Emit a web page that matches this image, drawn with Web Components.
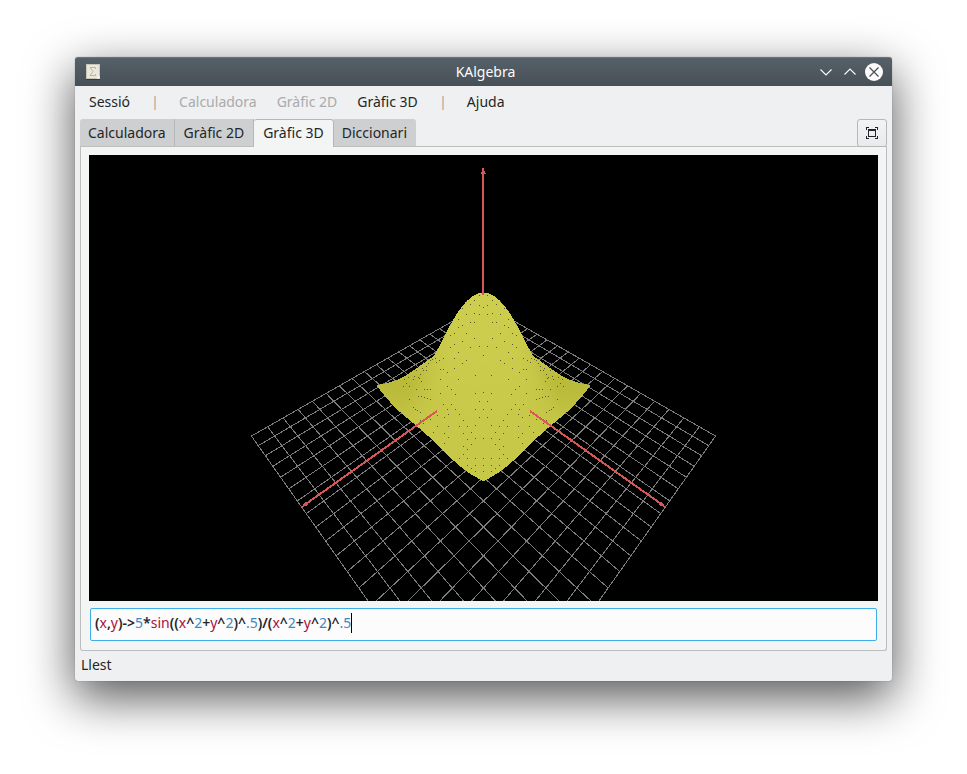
<!DOCTYPE html>
<html lang="ca">
<head>
<meta charset="utf-8">
<title>KAlgebra</title>
<style>
html { background: #fff; }
body {
  margin: 0; box-sizing: border-box; min-height: 100vh; padding: 57px 75px 93px;
  display: flex; flex-direction: column; background: #fff; overflow: hidden;
  font: 14px/20px "Noto Sans", "Open Sans", sans-serif; color: #232629;
}
</style>
</head>
<body>
<ka-window>
  <ka-titlebar slot="title">KAlgebra</ka-titlebar>
  <ka-menubar slot="menu">
    <ka-menu>Sessió</ka-menu><ka-separator></ka-separator><ka-menu disabled>Calculadora</ka-menu><ka-menu disabled>Gràfic 2D</ka-menu><ka-menu>Gràfic 3D</ka-menu><ka-separator></ka-separator><ka-menu>Ajuda</ka-menu>
  </ka-menubar>
  <ka-tabs slot="tabs">
    <ka-tab>Calculadora</ka-tab><ka-tab>Gràfic 2D</ka-tab><ka-tab selected>Gràfic 3D</ka-tab><ka-tab>Diccionari</ka-tab>
  </ka-tabs>
  <ka-plot></ka-plot>
  <ka-formula value="(x,y)->5*sin((x^2+y^2)^.5)/(x^2+y^2)^.5"></ka-formula>
  <span slot="status">Llest</span>
</ka-window>

<script>
const define = (name, html, setup) => {
  const template = document.createElement('template');
  template.innerHTML = html;
  customElements.define(name, class extends HTMLElement {
    constructor() {
      super();
      this.attachShadow({ mode: 'open' }).append(template.content.cloneNode(true));
    }
    connectedCallback() { if (setup) setup(this, this.shadowRoot); }
  });
};

define('ka-window', `
<style>
:host { flex: 1; display: flex; flex-direction: column; min-width: 0; background: #eff0f1; border-radius: 3px;
  box-shadow: 0 0 1px rgba(0,0,0,.5), 0 16px 48px 1px rgba(0,0,0,.66); }
main { flex: 1; min-height: 0; display: flex; flex-direction: column; gap: 7px; margin: 0 5px;
  padding: 8px 8px 9px; border: 1px solid #bcbebf; border-top: 0; border-radius: 0 0 3px 3px; background: #f3f4f4; }
footer { padding: 4px 6px 6px; }
</style>
<slot name="title"></slot><slot name="menu"></slot><slot name="tabs"></slot>
<main><slot></slot></main>
<footer><slot name="status"></slot></footer>`);

define('ka-titlebar', `
<style>
:host { display: grid; grid-template-columns: 1fr auto 1fr; align-items: center; height: 29px; box-sizing: border-box;
  padding: 0 6px 1px 10px; color: #fcfcfc; border-radius: 3px 3px 0 0;
  background: linear-gradient(#566068, #475057); border-top: 1px solid #69757d; }
svg { display: block; }
nav { display: flex; justify-content: flex-end; }
button { width: 24px; height: 24px; padding: 0; border: 0; background: none; display: grid; place-items: center; }
</style>
<svg width="16" height="18" viewBox="0 0 16 18" aria-hidden="true">
  <rect x="1" y="1.5" width="14" height="15.5" fill="#343b40"/>
  <rect x="1" y="1" width="14" height="15" fill="#e9e7de"/>
  <rect x="1.5" y="1.5" width="13" height="14" fill="none" stroke="#c9c5b8"/>
  <path d="M10.500 6V4.500H5L8 8.500L5 12.500H10.500V11" fill="none" stroke="#bdb698"/>
  <path d="M11.500 15.500L14.500 12.500V15.500Z" fill="#fff"/>
</svg>
<slot></slot>
<nav>
  <button aria-label="Minimitza"><svg width="18" height="18" viewBox="0 0 18 18"><path d="M3.500 6.500L9 12L14.500 6.500" fill="none" stroke="#fcfcfc" stroke-width="1.100"/></svg></button>
  <button aria-label="Maximitza"><svg width="18" height="18" viewBox="0 0 18 18"><path d="M3.500 11.500L9 6L14.500 11.500" fill="none" stroke="#fcfcfc" stroke-width="1.100"/></svg></button>
  <button aria-label="Tanca"><svg width="18" height="18" viewBox="0 0 18 18"><circle cx="9" cy="9" r="9" fill="#fcfcfc"/><path d="M4.500 4.500L13.500 13.500M13.500 4.500L4.500 13.500" stroke="#475057" stroke-width="1.200"/></svg></button>
</nav>`);

define('ka-menubar', `
<style>:host { display: flex; align-items: center; height: 33px; box-sizing: border-box; padding: 0 4px 2px; }</style>
<slot></slot>`);

define('ka-menu', `
<style>
:host { display: block; }
button { display: block; font: inherit; color: inherit; padding: 0 10px; margin: 0; border: 0; background: none; }
button:disabled { color: #a9abac; }
</style>
<button><slot></slot></button>`, (host, root) => {
  root.querySelector('button').disabled = host.hasAttribute('disabled');
});

define('ka-separator', `
<style>
:host { display: flex; justify-content: center; width: 28px; margin-left: 1px; }
i { width: 2px; height: 14px; margin-top: 2px; background: linear-gradient(90deg, #dcc0a6 50%, #b9c5d2 50%); }
</style><i></i>`);

define('ka-tabs', `
<style>
:host { display: flex; justify-content: space-between; height: 28px; margin: 0 5px; box-sizing: border-box;
  background: linear-gradient(#bcbebf, #bcbebf) bottom / 100% 1px no-repeat; }
div { display: flex; }
button { width: 30px; height: 28px; padding: 0; display: grid; place-items: center;
  border: 1px solid #b5b7b8; border-radius: 3px; background: linear-gradient(#f2f3f4, #e9eaeb); }
</style>
<div role="tablist"><slot></slot></div>
<button aria-label="Pantalla completa"><svg width="14" height="14" viewBox="0 0 14 14" shape-rendering="crispEdges">
  <path d="M1.500 4V1.500H4M10 1.500H12.500V4M12.500 10V12.500H10M4 12.500H1.500V10" fill="none" stroke="#232629"/>
  <path d="M3 3H11V11H3ZM4 5V10H10V5Z" fill="#232629" fill-rule="evenodd"/>
</svg></button>`);

define('ka-tab', `
<style>
:host { display: block; height: 27px; }
button { height: 100%; font: inherit; color: inherit; padding: 0 9px; box-sizing: border-box;
  border: 0; border-right: 1px solid #b5b7b8; background: #cdcfd0; }
:host(:first-child) button { padding: 0 8px; border-radius: 3px 0 0; }
:host(:last-child) button { padding-left: 8px; border-right: 0; border-radius: 0 3px 0 0; }
:host([selected]) { height: 28px; }
:host([selected]) button { padding-bottom: 2px; background: #f3f4f4; border-top: 1px solid #b5b7b8; border-radius: 3px 3px 0 0; }
</style>
<button role="tab"><slot></slot></button>`, (host, root) => {
  root.querySelector('button').setAttribute('aria-selected', host.hasAttribute('selected'));
});

define('ka-plot', `
<style>
:host { display: flex; flex: 1; min-height: 0; background: #000; }
svg { flex: 1; width: 100%; height: 100%; min-width: 0; }
</style>
<svg viewBox="0 0 789 446" preserveAspectRatio="xMidYMid slice" shape-rendering="crispEdges" role="img" aria-label="Gràfic 3D">
  <g id="grid" fill="none" stroke="#7c7c7c"></g>
  <g id="surface"></g>
  <g id="dots" fill="#55553a"></g>
  <g id="axes" stroke="#d85656" fill="#d85656" stroke-width="2"></g>
</svg>`, (host, root) => {
  /* Camera 20 units away, pitched 45 degrees, turned 45 degrees, 60 degree field of view. */
  const Q = Math.SQRT1_2, F = 223 / Math.tan(Math.PI / 6);
  const project = (x, y, z) => {
    const s = (x - y) * Q, t = (x + y) * Q, depth = 20 + (t - z) * Q;
    return [394.5 + F * s / depth, 223 - F * (t + z) * Q / depth];
  };
  const fmt = p => p[0].toFixed(2) + ' ' + p[1].toFixed(2);
  let grid = '';
  for (let i = -10; i <= 10; i++) {
    grid += `M${fmt(project(i, -10, -5))}L${fmt(project(i, 10, -5))}M${fmt(project(-10, i, -5))}L${fmt(project(10, i, -5))}`;
  }
  root.getElementById('grid').innerHTML = `<path d="${grid}"/>`;

  const height = (x, y) => { const r = Math.hypot(x, y); return r ? 5 * Math.sin(r) / r : 5; };
  const step = 0.125, quads = [];
  for (let x = -4; x < 4; x += step) for (let y = -4; y < 4; y += step) {
    const pts = [[x, y], [x + step, y], [x + step, y + step], [x, y + step]].map(([a, b]) => project(a, b, height(a, b)));
    const s = Math.abs(x - y) * Q, t = (x + y + step) * Q;
    const side = Math.max(0, Math.min(1, (s - 1.5) / 2.5)) * Math.exp(-(t - .4) * (t - .4) / 4);
    const light = Math.round(200 + height(x, y) - 13 * side);
    quads.push([t, `<path fill="rgb(${light},${light},${light - 127})" d="M${pts.map(fmt).join('L')}Z"/>`]);
  }
  root.getElementById('surface').innerHTML = quads.sort((a, b) => b[0] - a[0]).map(q => q[1]).join('');

  /* Mesh points in thirds of a pixel: offset from the centre line, then distance from the top of the view. */
  const upper = '12,15 27,31 51,34 12,45 39,43 63,54 0,52 27,70 51,73 75,88 12,73 39,97 63,106 27,97 51,130 87,130 75,112 99,136 27,145 63,154 12,168 87,163 39,173 99,172 75,187 0,196 51,211 87,205 63,220 24,256 87,235 75,269 108,247 120,238 129,268 120,205 132,211 141,216 129,238 144,205 153,208 159,212 171,208 165,220 171,229 180,218 183,235 180,242 189,253 171,241 195,262 207,259 192,265 201,240 210,268 225,262 237,268 186,274 231,280 240,289 222,289';
  const lower = '108,4 96,13 129,24 84,28 159,13 168,13 177,13 201,13 0,22 24,25 12,49 159,43 168,40 177,37 186,34 195,34 222,43 96,58 120,58 0,73 24,73 84,73 108,73 210,67 204,73 198,76 189,82 72,88 105,88 138,91 12,97 117,97 159,103 189,106 60,106 180,115 24,121 48,124 72,124 105,124 138,124 117,145 150,142 36,142 60,145 0,160 24,160 48,163 105,157 36,178 117,175 48,193 60,184 60,208 24,220 48,220 72,220 0,220 0,241 24,241 48,241 36,250 0,259 24,259';
  let dots = '';
  const plot = (list, top) => list.split(' ').forEach(pair => {
    const [dx, dy] = pair.split(',').map(n => Math.floor(n / 3));
    for (const x of dx ? [394 + dx, 394 - dx] : [394]) dots += `M${x} ${top + dy}h1v1h-1z`;
  });
  plot(upper, 135);
  plot(lower, 230);
  root.getElementById('dots').innerHTML = `<path d="${dots}"/>`;

  root.getElementById('axes').innerHTML = `
    <path d="M394 140V13M348 256L214 351M441 256L575 351"/>
    <path stroke="none" d="M394 12L397 19H392ZM213 352L216 347L220 350ZM576 352L573 347L569 350Z"/>`;
});

define('ka-formula', `
<style>
:host { display: grid; margin: 0 1px; height: 33px; box-sizing: border-box; border: 1px solid #3daee9; border-radius: 2px; background: #fcfcfc; }
div, input { grid-area: 1 / 1; font: inherit; padding: 0 4px; margin: 0; min-width: 0; }
div { display: flex; align-items: center; white-space: pre; padding-bottom: 3px; }
input { color: transparent; caret-color: transparent; background: none; border: 0; outline: 0; width: 100%; box-sizing: border-box; }
b { font-weight: 600; } .name { color: #a8123f; } .number { color: #3a8ac6; }
i { width: 1px; height: 20px; background: #000; }
</style>
<div aria-hidden="true"></div><input type="text" aria-label="Funció" spellcheck="false">`, (host, root) => {
  const input = root.querySelector('input'), view = root.querySelector('div');
  input.value = host.getAttribute('value');
  const paint = () => {
    view.replaceChildren(...(input.value.match(/[a-z]+|[\d.]+|[^a-z\d.]+/gi) || []).map(token => {
      const kind = /^[a-z]/i.test(token) ? 'name' : /^[\d.]/.test(token) ? 'number' : '';
      const node = document.createElement(kind ? 'span' : 'b');
      node.className = kind;
      node.textContent = token;
      return node;
    }), document.createElement('i'));
  };
  input.addEventListener('input', paint);
  paint();
});
</script>
</body>
</html>
